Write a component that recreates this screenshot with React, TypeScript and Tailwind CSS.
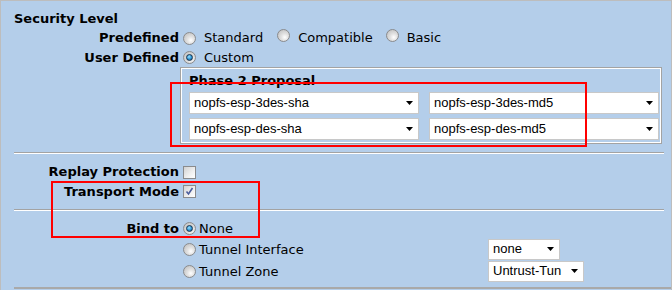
import React from 'react';

const Radio = ({ checked }: { checked?: boolean }) => (
  <span className="relative inline-block w-[13px] h-[13px] shrink-0 rounded-full border border-[#8a8b8d] bg-[radial-gradient(circle_at_62%_66%,#ffffff_0%,#e2e2e2_35%,#b9b9b9_100%)]">
    {checked && (
      <span className="absolute left-[2px] top-[2px] w-[7px] h-[7px] rounded-full border border-[#16334f] bg-[radial-gradient(circle_at_40%_35%,#9be2ff_0%,#2b93d4_55%,#0c4478_100%)]" />
    )}
  </span>
);

const Checkbox = ({ checked }: { checked?: boolean }) => (
  <span className="relative inline-block w-[13px] h-[13px] shrink-0 border border-[#8a8b8d] bg-[linear-gradient(135deg,#d2d2d2_0%,#f0f0f0_60%,#ffffff_100%)]">
    {checked && (
      <svg className="absolute left-[1px] top-[1px]" width="9" height="9" viewBox="0 0 9 9">
        <path d="M1.5 4.5 L3.5 7 L7.5 1" fill="none" stroke="#4c5d9c" strokeWidth="1.6" />
      </svg>
    )}
  </span>
);

const Select = ({ value, className }: { value: string; className: string }) => (
  <div
    className={`flex items-center justify-between bg-white border border-[#c8c8c8] pl-[4px] pr-[5px] font-['Liberation_Sans',Arial,sans-serif] text-[13px] text-black ${className}`}
  >
    <span>{value}</span>
    <svg width="7" height="4" viewBox="0 0 7 4">
      <path d="M0 0 H7 L3.5 4 Z" fill="#000" />
    </svg>
  </div>
);

const Label = ({ children }: { children: React.ReactNode }) => (
  <div className="w-[165px] shrink-0 text-right font-bold">{children}</div>
);

const Separator = () => (
  <div className="w-[650px] h-[2px] border-t border-[#a3a3a3] border-b border-b-white" />
);

export default function App() {
  return (
    <div className="relative w-[672px] h-[290px] overflow-hidden bg-[#b4ceea] border-t border-x border-[#bdbdbd] pl-[13px] pt-[8px] font-['DejaVu_Sans',Verdana,sans-serif] text-[13px] text-black">
      {/* Security level */}
      <div className="h-[19px] flex items-center font-bold">Security Level</div>

      <div className="h-[20px] flex items-center">
        <Label>Predefined</Label>
        <div className="ml-[4px] flex items-center">
          <Radio />
          <span className="ml-[8px]">Standard</span>
          <span className="ml-[14px]"><Radio /></span>
          <span className="ml-[8px]">Compatible</span>
          <span className="ml-[13px]"><Radio /></span>
          <span className="ml-[8px]">Basic</span>
        </div>
      </div>

      <div className="h-[19px] flex items-center">
        <Label>User Defined</Label>
        <div className="ml-[4px] flex items-center">
          <Radio checked />
          <span className="ml-[8px]">Custom</span>
        </div>
      </div>

      {/* Phase 2 proposal */}
      <div className="ml-[166px] w-[482px] h-[77px] border border-[#a3a3a3] shadow-[inset_0_0_0_1px_#ffffff] pl-[8px]">
        <div className="h-[24px] pt-[2px] leading-[22px] font-bold">Phase 2 Proposal</div>
        <div className="grid grid-cols-[230px_230px] gap-x-[10px] gap-y-[4px]">
          <Select value="nopfs-esp-3des-sha" className="h-[22px]" />
          <Select value="nopfs-esp-3des-md5" className="h-[22px]" />
          <Select value="nopfs-esp-des-sha" className="h-[22px]" />
          <Select value="nopfs-esp-des-md5" className="h-[22px]" />
        </div>
      </div>

      <div className="mt-[8px]"><Separator /></div>

      <div className="mt-[8px] h-[20px] flex items-center">
        <Label>Replay Protection</Label>
        <div className="ml-[4px] flex items-center"><Checkbox /></div>
      </div>
      <div className="h-[19px] flex items-center">
        <Label>Transport Mode</Label>
        <div className="ml-[4px] flex items-center"><Checkbox checked /></div>
      </div>

      <div className="mt-[8px]"><Separator /></div>

      {/* Bind to */}
      <div className="mt-[8px] h-[19px] flex items-center">
        <Label>Bind to</Label>
        <div className="ml-[4px] flex items-center">
          <Radio checked />
          <span className="ml-[3px]">None</span>
        </div>
      </div>
      <div className="h-[22px] flex items-center">
        <div className="w-[165px] shrink-0" />
        <div className="ml-[4px] flex items-center">
          <Radio />
          <span className="ml-[3px] w-[289px] pt-[2px]">Tunnel Interface</span>
          <Select value="none" className="h-[21px] w-[72px]" />
        </div>
      </div>
      <div className="h-[22px] flex items-center">
        <div className="w-[165px] shrink-0" />
        <div className="ml-[4px] flex items-center">
          <Radio />
          <span className="ml-[3px] w-[289px] pt-[2px]">Tunnel Zone</span>
          <Select value="Untrust-Tun" className="h-[21px] w-[96px]" />
        </div>
      </div>

      <div className="mt-[5px] h-[2px] bg-[#a9a9a9]" />

      {/* annotation boxes */}
      <div className="absolute left-[169px] top-[81px] w-[417px] h-[65px] border-2 border-[#ff0000]" />
      <div className="absolute left-[50px] top-[180px] w-[209px] h-[57px] border-2 border-[#ff0000]" />
    </div>
  );
}
